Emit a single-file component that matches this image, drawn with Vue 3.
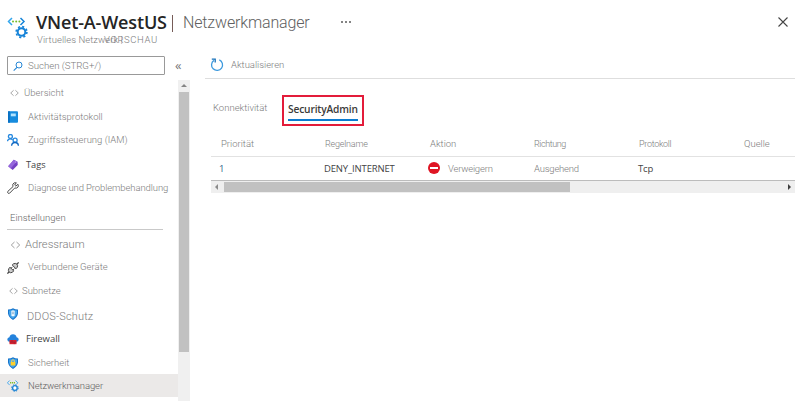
<script setup>
const mainItems = [
  { text: 'Übersicht', icon: 'code', cls: 'overview' },
  { text: 'Aktivitätsprotokoll', icon: 'log', cls: 'activity' },
  { text: 'Zugriffssteuerung (IAM)', icon: 'iam', cls: 'access' },
  { text: 'Tags', icon: 'tag', cls: 'tags' },
  { text: 'Diagnose und Problembehandlung', icon: 'wrench', cls: 'diagnose' },
]
const settingItems = [
  { text: 'Adressraum', icon: 'code', cls: 'address' },
  { text: 'Verbundene Geräte', icon: 'plug', cls: 'devices' },
  { text: 'Subnetze', icon: 'code', cls: 'subnets' },
  { text: 'DDOS-Schutz', icon: 'shield', cls: 'ddos' },
  { text: 'Firewall', icon: 'firewall', cls: 'firewall' },
  { text: 'Sicherheit', icon: 'lock', cls: 'security' },
  { text: 'Netzwerkmanager', icon: 'network', cls: 'manager' },
]
const groups = [{ id: 'main', items: mainItems }, { id: 'settings', title: 'Einstellungen', items: settingItems }]
</script>

<template>
  <div class="page">
    <header class="head">
      <svg class="logo" viewBox="0 0 22 24">
        <g fill="none" stroke-width="1.5"><path d="M5 3 1.5 6.5 5 10" stroke="#32a5ec" /><path d="m13.5 3 3.5 3.5-3.5 3.5" stroke="#1684d8" /></g>
        <g fill="#76bc2d"><circle cx="6" cy="6.5" r="1" /><circle cx="9.2" cy="6.5" r="1" /><circle cx="12.4" cy="6.5" r="1" /></g>
        <circle cx="14.5" cy="17" r="5.4" fill="none" stroke="#1683d8" stroke-width="1.6" stroke-dasharray="2.12 2.12" />
        <circle cx="14.5" cy="17" r="3.8" fill="#fff" stroke="#1683d8" stroke-width="2" />
      </svg>
      <div class="titles">
        <div class="title-row">
          <h1>VNet-A-WestUS</h1><span class="bar"></span><span class="blade">Netzwerkmanager</span><span class="dots"><i></i><i></i><i></i></span>
        </div>
        <div class="sub"><span class="kind">Virtuelles Netzwerk |</span><span class="preview">VORSCHAU</span></div>
      </div>
      <svg class="close" viewBox="0 0 10 10"><path d="m.5.5 9 9m0-9-9 9" stroke="#444" stroke-width="1.1" /></svg>
    </header>

    <div class="body">
      <aside class="side">
        <div class="search-row">
          <div class="search">
            <svg viewBox="0 0 10 10"><circle cx="6" cy="4" r="3" fill="none" stroke="#2686d5" /><path d="M4 6.3.7 9.6" stroke="#2686d5" stroke-width="1.1" /></svg>
            <span>Suchen (STRG+/)</span>
          </div>
          <span class="collapse">«</span>
        </div>
        <div class="nav-wrap">
          <nav>
            <div v-for="g in groups" :key="g.id">
              <div v-if="g.title" class="section"><span>{{ g.title }}</span></div>
              <div v-for="it in g.items" :key="it.text" class="item" :class="it.cls">
                <svg v-if="it.icon === 'code'" class="code" viewBox="0 0 10 8"><path d="M4 1 .8 4 4 7M6 1l3.2 3L6 7" fill="none" stroke="#858585" stroke-width=".8" /></svg>
                <svg v-else class="icon" viewBox="0 0 12 12">
                  <g v-if="it.icon === 'log'"><rect x="1" y=".3" width="10" height="11.4" rx="1" fill="#168bdd" /><rect x="1" y=".3" width="1.8" height="11.4" fill="#0870c3" /><rect x="3.8" y="2.5" width="5" height="2.8" fill="#b2e4ff" /></g>
                  <g v-else-if="it.icon === 'iam'" fill="none" stroke="#2789df" stroke-width="1.3"><circle cx="3.4" cy="2.5" r="2" /><path d="M.5 7.2Q.7 4.8 3.3 4.8q1.5 0 2.3 1.2" /><circle cx="8.1" cy="6.2" r="2" /><path d="M4.6 11.7q.2-3.2 3.4-3.2t3.4 3.2" stroke="#1068c2" /></g>
                  <g v-else-if="it.icon === 'tag'"><path d="M6.8.8 10.6 2.7l.1 3.4-5 5L1.2 7.2z" fill="#7541c4" /><path d="M6.8.8 1.2 7.2l2.5 2.2 6-6.9z" fill="#9567dc" /><circle cx="8.8" cy="3" r=".6" fill="#d9bdf7" /></g>
                  <path v-else-if="it.icon === 'wrench'" d="M11 2.3 8.8 4.1 7.7 3 9.3.8Q6.8.2 5.8 2.2L6 4.6.8 9.4q-.5 1 .2 1.7t1.6.1l5-5.1q2.6.4 3.5-1.2.6-1.3-.1-2.6z" fill="#fff" stroke="#494949" />
                  <g v-else-if="it.icon === 'plug'" stroke="#444" fill="none"><path d="m.4 11.6 2-2M9.4 2.6 11.7.4" stroke-width="1.3" /><path d="m3 5.2 3.7 3.7-1.3 1.4q-2 1-3.3-.3t-.3-3.3zM5.2 3 9 6.8l1.2-1.5q1-1.8-.3-3.1t-3.2-.5z" fill="#ccc" /><path d="m4 6.3 1.5-1.5m.3 3.3 1.5-1.5" /></g>
                  <g v-else-if="it.icon === 'shield' || it.icon === 'lock'"><path d="M6 .3q2.3 1.4 5 1.3v4Q10.5 9.5 6 11.9 1.5 9.5 1 5.6v-4Q3.7 1.7 6 .3z" fill="#1674cb" /><path d="M6 1.5q2 1 4 1v3Q9.6 8.7 6 10.8 2.4 8.7 2 5.5v-3q2 0 4-1z" fill="#45a5eb" />
                    <g v-if="it.icon === 'lock'"><path d="M4.6 5V4q0-1.2 1.4-1.2T7.4 4v1" fill="none" stroke="#f6d353" stroke-width=".9" /><rect x="3.7" y="4.9" width="4.6" height="3.6" fill="#ffd02b" /></g>
                    <g v-else><rect x="4.4" y="2.6" width="3.2" height="5.7" rx=".7" fill="#f2faff" /><path d="M5.2 4.2h1.6M5.2 5.7h1.6" stroke="#467eae" stroke-width=".7" /></g></g>
                  <g v-else-if="it.icon === 'firewall'"><path d="M2.8 8.8Q.3 8.5.3 6.4q0-1.8 2.1-2.1Q3 1.2 6 1.2t3.6 3q2.1.3 2.1 2.2 0 2.1-2.5 2.4z" fill="#2382dc" /><rect x="2.5" y="7" width="7" height="4.2" fill="#d9232e" /><path d="M2.5 9.1h7M5 7v2.1m2.2 0v2.1" stroke="#901d35" stroke-width=".6" /></g>
                  <g v-else fill="none"><path d="M2.7.5.4 2.8l2.3 2.3M8.5.5l2.3 2.3-1.5 1.5" stroke="#48aaee" /><path d="M3 2.8h5.3" stroke="#7bbd31" stroke-width="1.5" stroke-dasharray="1.2 .7" /><circle cx="7.9" cy="8" r="3.3" stroke="#1a82d5" stroke-dasharray="1.4 1.2" /><circle cx="7.9" cy="8" r="2.3" fill="#fff" stroke="#1a82d5" stroke-width="1.3" /></g>
                </svg>
                <span>{{ it.text }}</span>
              </div>
            </div>
          </nav>
          <div class="vscroll"><b></b><i></i></div>
        </div>
      </aside>

      <main>
        <div class="toolbar">
          <svg viewBox="0 0 14 14"><path d="M9.3 1.9a5.5 5.5 0 1 1-5.4.5" fill="none" stroke="#3d9ade" stroke-width="1.3" /><path d="M1.8 1.2h3.4v3.4" fill="none" stroke="#1670b9" stroke-width="1.3" /></svg>
          <span>Aktualisieren</span>
        </div>
        <div class="tabs">
          <span class="tab">Konnektivität</span>
          <div class="active"><span>SecurityAdmin</span></div>
        </div>
        <div class="table">
          <div class="row th"><span class="c1">Priorität</span><span class="c2">Regelname</span><span class="c3">Aktion</span><span class="c4">Richtung</span><span class="c5">Protokoll</span><span class="c6">Quelle</span></div>
          <div class="row td"><span class="c1">1</span><span class="c2">DENY_INTERNET</span><span class="c3"><i class="deny"></i><em>Verweigern</em></span><span class="c4">Ausgehend</span><span class="c5">Tcp</span><span class="c6"></span></div>
          <div class="hscroll"><b></b><i></i><u></u></div>
        </div>
      </main>
    </div>
  </div>
</template>

<style>
body { background: #fff; overflow: hidden; }
</style>
<style scoped>
* { box-sizing: border-box; }
.page { width: 800px; height: 401px; overflow: hidden; color: #7c7c7c; font: 300 9.5px/12px Roboto, "Liberation Sans", sans-serif; white-space: nowrap; }
.head { height: 56px; display: flex; padding: 15px 0 0 7px; }
.logo { width: 22px; height: 24px; }
.titles { flex: 1; padding-left: 7px; margin-top: -5px; }
.title-row { display: flex; height: 24px; align-items: center; }
h1 { margin: 0; width: 131px; font: 600 18px/24px "Open Sans", sans-serif; color: #252525; letter-spacing: -.15px; }
.bar { width: 1px; height: 17px; margin: 2px 10px 0 5px; background: #765c58; }
.blade { width: 126px; font-size: 16px; line-height: 24px; margin-top: 2px; letter-spacing: -.15px; color: #606060; }
.dots { display: flex; gap: 2px; margin-left: 32px; }
.dots i { width: 2px; height: 2px; background: #848484; }
.sub { display: flex; height: 12px; line-height: 12px; }
.kind { width: 68px; padding-left: 1px; overflow: visible; letter-spacing: .05px; }
.preview { letter-spacing: .6px; }
.close { width: 10px; height: 10px; margin: 2px 12px 0 0; }
.body { display: flex; height: 345px; }
.side { width: 191px; }
.search-row { display: flex; height: 24px; padding-left: 7px; }
.search { width: 158px; height: 19px; border: 1px solid #999; border-radius: 1px; display: flex; align-items: center; gap: 5px; padding-left: 5px; font-size: 9.7px; letter-spacing: -.05px; }
.search svg { width: 10px; height: 10px; }
.collapse { margin: 1px 0 0 10px; font: 13px/16px "Open Sans", sans-serif; color: #777; }
.nav-wrap { display: flex; height: 321px; }
nav { width: 178px; }
.item { height: 24px; display: flex; align-items: center; padding-left: 7px; }
.icon { width: 12px; height: 12px; flex: none; margin-right: 9px; }
.code { width: 9px; height: 8px; margin: 0 5px 0 3px; flex: none; }
.overview, .activity, .ddos { padding-top: 1px; }
.diagnose { letter-spacing: -.1px; }
.section { height: 32px; padding: 11px 0 0 7px; }
.section span { display: block; width: 156px; height: 19px; padding: 1px 0 0 3px; border-bottom: 1px solid #c9c9c9; color: #666; }
.tags, .firewall { color: #444; font-family: "Open Sans", sans-serif; font-weight: 400; }
.tags .icon, .firewall .icon { margin-right: 7px; }
.tags { font-size: 9.2px; padding-top: 1px; }
.address { font-size: 11.2px; padding-top: 1px; }
.address .code { width: 11px; margin: 0 4px 0 3px; }
.devices { height: 23px; }
.devices span { margin-top: -1px; }
.subnets .code { margin: 0 4px 0 2px; }
.ddos { font-size: 11px; letter-spacing: .15px; }
.ddos .icon { margin: -3px 8px 0 0; }
.ddos span { margin-top: 2px; }
.security { height: 23px; }
.manager { height: 23px; background: #ebe9e8; color: #606060; letter-spacing: -.1px; }
.vscroll { width: 12px; background: #f0f0f0; padding: 4px 1px 0; }
.vscroll b { display: block; width: 0; height: 0; margin: 0 2px 5px; border: 3px solid transparent; border-top: 0; border-bottom-color: #858585; }
.vscroll i { display: block; height: 260px; background: #c1c1c1; }
main { width: 609px; }
.toolbar { width: 590px; margin-left: 14px; height: 23px; display: flex; padding: 2px 0 0 5px; gap: 7px; border-bottom: 1px solid #dedede; line-height: 14px; }
.toolbar svg { width: 14px; height: 14px; }
.tabs { height: 49px; display: flex; padding: 16px 0 0 22px; }
.tab { width: 69px; padding-top: 7px; }
.active { width: 82px; height: 31px; border: 2px solid #e31c3a; padding: 3px 4px 0; }
.active span { display: block; height: 21px; border-bottom: 2px solid #0b7bd0; color: #3a3a3a; font: 600 10.2px/18px "Open Sans", sans-serif; letter-spacing: -.15px; }
.table { width: 584px; margin-left: 20px; }
.row { display: grid; grid-template-columns: 113px 105px 104px 104px 106px 52px; align-items: center; }
.th { height: 29px; padding-top: 4px; border-bottom: 1px solid #e2e2e2; }
.td { height: 24px; border-bottom: 1px solid #bcbcbc; }
.c1 { padding-left: 10px; }
.th .c2 { padding-left: 1px; font-size: 9px; letter-spacing: -.2px; }
.th .c4, .th .c5 { font-size: 9px; padding-left: 1px; letter-spacing: -.1px; }
.th .c4 { letter-spacing: -.4px; }
.th .c5 { letter-spacing: -.3px; padding-left: 2px; }
.th .c6 { padding-left: 1px; }
.c3, .c4, .c5 { padding-left: 1px; }
.td .c4 { letter-spacing: -.2px; }
.td .c1, .td .c2, .td .c5 { color: #444; font-family: "Open Sans", sans-serif; font-weight: 400; letter-spacing: -.15px; }
.td .c1 { padding-left: 8px; color: #32688a; }
.td .c3 { display: flex; align-items: center; padding: 0; gap: 8px; margin-left: -1px; }
.td em { font-style: normal; letter-spacing: -.2px; }
.deny { width: 12px; height: 12px; margin-top: -2px; border-radius: 50%; background: #df1524; display: grid; place-items: center; }
.deny::after { content: ""; width: 8px; height: 2px; background: white; }
.hscroll { height: 12px; background: #efefef; display: flex; align-items: center; padding-left: 4px; }
.hscroll b, .hscroll u { width: 0; height: 0; border: 3px solid transparent; }
.hscroll b { border-left: 0; border-right-color: #8b8b8b; }
.hscroll i { width: 346px; height: 10px; margin-left: 6px; background: #c1c1c1; }
.hscroll u { margin-left: auto; margin-right: 4px; border-right: 0; border-left-color: #3e3e3e; }
</style>
